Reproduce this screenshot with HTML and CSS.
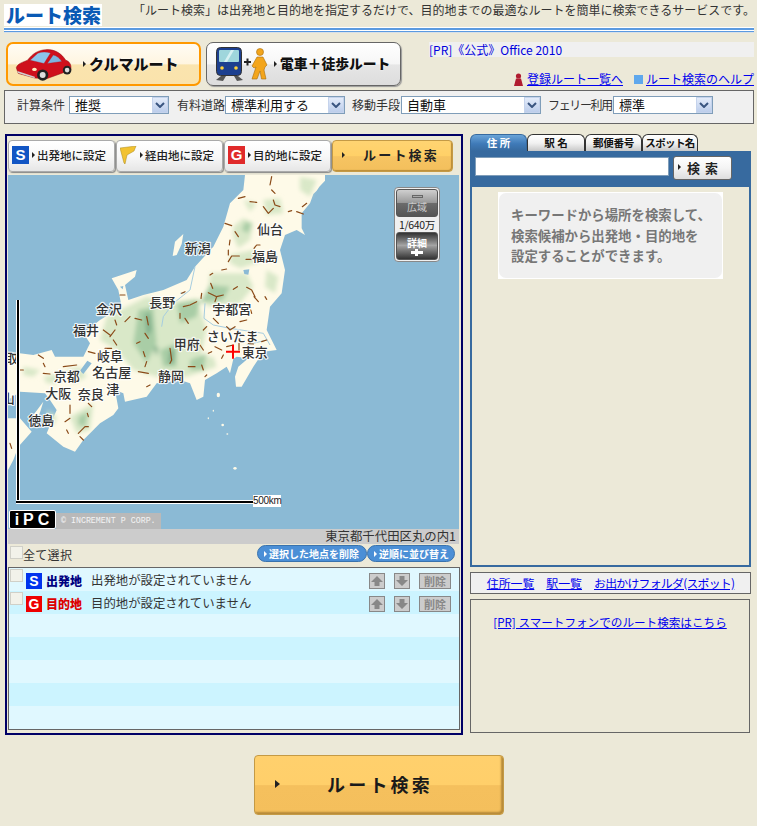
FILE: index.html
```html
<!DOCTYPE html>
<html lang="ja">
<head>
<meta charset="utf-8">
<title>ルート検索</title>
<link rel="stylesheet" href="styles.css">
</head>
<body>
<header class="top">
  <h1 class="logo">ルート検索</h1>
  <p class="lead">「ルート検索」は出発地と目的地を指定するだけで、目的地までの最適なルートを簡単に検索できるサービスです。</p>
</header>
<div class="rule"></div>

<div class="modes">
  <button class="mode mode-on">
    <svg class="car" width="60" height="33" viewBox="22 25 180 100">
      <path d="M28 85 C32 72 48 68 62 62 C78 42 92 32 118 30 C145 28 165 42 178 62 C190 66 196 76 193 92 L120 118 L84 116 L34 102 Z" fill="#cf101c" stroke="#8a0a10" stroke-width="1.500"/>
      <path d="M70 62 L93 41 C105 36 118 36 132 40 L112 72 Z" fill="#8cc4ea" stroke="#a5101a" stroke-width="1"/>
      <path d="M122 72 L140 46 C150 48 160 56 166 66 Z" fill="#7db4de" stroke="#a5101a" stroke-width="1"/>
      <path d="M31 95 L84 112 L84 117 L33 101 Z" fill="#cfcfcf"/>
      <ellipse cx="83" cy="90" rx="7" ry="5" fill="#ffeec0"/>
      <circle cx="108" cy="107" r="17" fill="#222"/><circle cx="108" cy="107" r="9" fill="#ddd"/>
      <circle cx="182" cy="92" r="13" fill="#222"/><circle cx="182" cy="92" r="7" fill="#ddd"/>
    </svg>
    <i class="tri tri-car"></i><span class="mode-text">クルマルート</span>
  </button>
  <button class="mode">
    <svg width="54" height="34" viewBox="0 0 54 34" class="rail">
      <path d="M5 29 L0 33 L7 34 L10 29 Z M18 29 L21 34 L27 33 L22 29 Z" fill="#555"/>
      <rect x="0.500" y="0.500" width="25" height="28" rx="4" fill="#1c3f8f" stroke="#333"/>
      <rect x="3" y="3" width="20" height="12" rx="1" fill="#9fd6dc"/>
      <path d="M8 15 L15 3 L18 3 L11 15 Z" fill="#d6f1f3"/>
      <circle cx="6" cy="21" r="1.800" fill="#ffd23a"/><circle cx="20" cy="21" r="1.800" fill="#ffd23a"/>
      <path d="M28 15 H35 M31.500 11.500 V18.500" stroke="#222" stroke-width="2"/>
      <circle cx="44" cy="5" r="3.500" fill="#f3a51c" stroke="#a86d0c" stroke-width=".6"/>
      <path d="M41 10 L47 10 L51 18 L49 20 L48 23 L50 32 L45.500 32 L44 24 L41 32 L36 32 L40 20 L38 21 L36 19 Z" fill="#f3a51c" stroke="#a86d0c" stroke-width=".6"/>
    </svg>
    <i class="tri tri-rail"></i><span class="mode-text mode-text-s">電車＋徒歩ルート</span>
  </button>
  <div class="mode-side">
    <div class="pr"><a href="#">[PR]《公式》Office 2010</a></div>
    <div class="helps">
      <svg width="9" height="13" viewBox="0 0 9 13"><circle cx="4.500" cy="3" r="2.600" fill="#b01c30"/><path d="M2 5.500 H7 L9 13 H0 Z" fill="#b01c30"/></svg>
      <a href="#">登録ルート一覧へ</a>
      <i class="sq"></i>
      <a href="#">ルート検索のヘルプ</a>
    </div>
  </div>
</div>

<form class="conds">
  <label class="cond c1">計算条件<span class="sel s1"><select><option>推奨</option></select><i class="arr"><svg width="10" height="6" viewBox="0 0 10 6"><path d="M1 1 L5 5 L9 1" fill="none" stroke="#3a5580" stroke-width="2"/></svg></i></span></label>
  <label class="cond c2">有料道路<span class="sel s2"><select><option>標準利用する</option></select><i class="arr"><svg width="10" height="6" viewBox="0 0 10 6"><path d="M1 1 L5 5 L9 1" fill="none" stroke="#3a5580" stroke-width="2"/></svg></i></span></label>
  <label class="cond c3">移動手段<span class="sel s3"><select><option>自動車</option></select><i class="arr"><svg width="10" height="6" viewBox="0 0 10 6"><path d="M1 1 L5 5 L9 1" fill="none" stroke="#3a5580" stroke-width="2"/></svg></i></span></label>
  <label class="cond c4">フェリー利用<span class="sel s1"><select><option>標準</option></select><i class="arr"><svg width="10" height="6" viewBox="0 0 10 6"><path d="M1 1 L5 5 L9 1" fill="none" stroke="#3a5580" stroke-width="2"/></svg></i></span></label>
</form>

<main class="main">
  <section class="left">
    <div class="acts">
      <button class="act"><b class="mark mark-s">S</b><i class="tri"></i>出発地に設定</button>
      <button class="act"><svg class="flag" width="17" height="18" viewBox="0 0 17 18"><path d="M0 2 L16 0 L14 5 L7 9 L5 18 L4 17 Z" fill="#f2c230" stroke="#a8881c" stroke-width=".5"/></svg><i class="tri"></i>経由地に設定</button>
      <button class="act"><b class="mark mark-g">G</b><i class="tri"></i>目的地に設定</button>
      <button class="act-go"><i class="tri tri-go"></i><span>ルート検索</span></button>
    </div>

    <div class="map">
      <svg class="mapsvg" width="451" height="354" viewBox="24 15 1353 1062">
        <defs><filter id="soft"><feGaussianBlur stdDeviation="7"/></filter><clipPath id="frame"><rect x="24" y="15" width="1353" height="1062"/></clipPath></defs>
        <rect class="sea" x="24" y="15" width="1353" height="1062"/>
        <g clip-path="url(#frame)">
        <path class="land" d="M735 15 L975 15 L975 32 L958 50 L950 62 L940 72 L930 100 L905 130 L905 175 L915 195 L890 180 L855 195 L840 240 L855 300 L845 370 L810 410 L800 480 L830 540 L790 545 L760 590 L725 650 L708 650 L705 620 L715 590 L745 565 L710 560 L700 567 L690 610 L680 590 L650 610 L615 630 L610 680 L590 690 L570 640 L540 630 L470 640 L440 680 L375 695 L370 670 L345 660 L355 715 L340 735 L300 760 L250 810 L225 845 L190 830 L140 790 L170 720 L150 690 L135 670 L60 665 L24 690 L24 545 L100 555 L155 540 L165 560 L250 560 L270 520 L250 490 L300 450 L365 410 L355 360 L335 325 L410 300 L405 320 L375 345 L385 390 L430 375 L490 360 L560 330 L585 290 L640 230 L670 170 L690 100 L730 60 Z"/>
        <path class="land" d="M24 745 L60 745 L95 785 L55 830 L40 870 L24 900 Z"/>
        <path class="land" d="M100 735 L130 695 L112 752 Z"/>
        <path class="land" d="M518 258 L525 215 L550 192 L545 222 L530 255 Z"/>
        <ellipse class="land" cx="655" cy="675" rx="5" ry="7"/><ellipse class="land" cx="640" cy="722" rx="2" ry="3"/><ellipse class="land" cx="625" cy="745" rx="2" ry="3"/><ellipse class="land" cx="668" cy="765" rx="4" ry="4"/><ellipse class="land" cx="682" cy="792" rx="3" ry="2"/><ellipse class="land" cx="705" cy="895" rx="5" ry="4"/>
        <g filter="url(#soft)">
          <path class="g1" d="M900 20 L950 30 L930 80 L900 60 Z M730 90 L770 100 L750 125 Z M790 90 L840 85 L850 130 L800 135 Z M730 145 L760 160 L750 210 L715 235 L700 200 L700 170 Z M690 255 L760 240 L780 275 L720 295 L690 280 Z M800 300 L835 320 L825 370 L795 350 Z M630 310 L740 310 L760 350 L720 400 L620 410 Z"/>
          <path class="g1" d="M320 440 L440 380 L510 400 L590 385 L620 480 L600 560 L640 560 L650 590 L560 620 L470 620 L400 600 L350 540 L300 510 Z"/>
          <path class="g1" d="M70 590 L120 600 L100 620 L70 615 Z M130 620 L180 610 L170 640 L140 640 Z M200 600 L240 590 L260 620 L220 640 Z M210 740 L280 700 L270 780 L230 790 Z M140 720 L170 740 L160 770 Z"/>
          <path class="g2" d="M630 345 L690 350 L670 390 L600 400 Z M415 420 L460 410 L470 520 L440 580 L400 520 Z M530 400 L600 390 L590 440 L540 460 Z M480 540 L530 520 L530 590 L490 590 Z M570 570 L620 550 L610 600 L570 600 Z M735 155 L755 160 L745 190 L725 180 Z M235 740 L265 725 L255 770 L235 765 Z"/>
          <path class="g3" d="M435 430 L450 430 L455 480 L440 500 Z M460 530 L475 530 L470 560 Z M510 540 L525 540 L520 580 L505 580 Z"/>
        </g>
        <path class="water" d="M585 290 L570 360 L520 400 L490 440 L485 470 M540 370 L555 368 M615 400 L612 445 L640 465 L690 475 L790 490 L810 525 M800 510 L740 525"/>
        <path class="lake" d="M262 572 L275 580 L250 612 L240 602 Z M730 300 L748 298 L745 314 L733 312 Z M360 350 L370 348 L368 358 Z"/>
        <path class="road" d="M815 20 L810 45 M815 60 L825 70 M715 85 L735 80 M750 95 L770 97 M820 90 L825 105 L840 110 M790 110 L805 130 L820 115 M865 125 L875 122 M890 125 L910 132 M907 110 L920 100 M675 160 L695 167 M705 185 L715 200 M690 210 L688 225 M685 240 L685 255 M685 275 L695 258 L718 258 M738 268 L755 268 M762 235 L770 225 L780 225 M665 300 L680 297 M630 315 L638 310 M632 340 L638 355 M700 358 L712 350 M740 352 L755 360 L765 380 M762 380 L775 395 M795 380 L800 388 M625 368 L650 380 L670 375 M650 380 L645 395 M605 370 L603 385 M550 410 L570 405 L590 395 M555 365 L545 370 M540 430 L540 445 M555 445 L565 460 M640 445 L655 460 M680 470 L690 480 L705 470 M720 455 L740 450 M755 430 L752 420 M610 480 L620 470 M645 530 L665 540 M680 530 L700 525 M717 520 L717 540 M745 520 L760 522 M785 515 L800 510 M665 565 L670 555 M625 550 L635 545 M600 525 L610 540 M510 535 L515 570 L510 580 M565 590 L585 590 M605 585 L610 600 M415 605 L445 610 M440 575 L435 590 M430 545 L435 560 M410 520 L420 515 M435 490 L445 505 M440 440 L445 465 M405 445 L425 450 M375 455 L390 440 M345 450 L350 465 M330 500 L345 480 M310 480 L330 495 M340 510 L350 525 M265 545 L285 550 M315 535 L335 535 M115 555 L130 565 M130 580 L135 590 M190 590 L230 585 M60 600 L70 600 M210 705 L210 730 M195 755 L210 745 M265 700 L275 710 M262 730 L265 740 M235 790 L255 770 L265 770 M240 800 L250 810 M200 780 L205 790 M30 820 L35 835 M440 650 L450 645 M615 620 L620 615 M360 375 L375 375 M130 610 L150 612"/>
        <text class="lb" x="810" y="192">仙台</text>
        <text class="lb" x="593" y="250">新潟</text>
        <text class="lb" x="795" y="272">福島</text>
        <text class="lb" x="487" y="411">長野</text>
        <text class="lb" x="327" y="432">金沢</text>
        <text class="lb" x="695" y="432">宇都宮</text>
        <text class="lb" x="258" y="495">福井</text>
        <text class="lb" x="698" y="512">さいたま</text>
        <text class="lb" x="560" y="536">甲府</text>
        <text class="lb" x="764" y="561">東京</text>
        <text class="lb" x="330" y="573">岐阜</text>
        <text class="lb" x="335" y="621">名古屋</text>
        <text class="lb" x="200" y="633">京都</text>
        <text class="lb" x="513" y="633">静岡</text>
        <text class="lb" x="338" y="672">津</text>
        <text class="lb" x="175" y="685">大阪</text>
        <text class="lb" x="272" y="688">奈良</text>
        <text class="lb" x="124" y="765">徳島</text>
        <text class="lb" x="15" y="578">鳥取</text>
        <text class="lb" x="5" y="698">岡山</text>
        <path class="cross" d="M678 545 H720 M699 524 V566"/>
        </g>
      </svg>

      <div class="scale-v"></div>
      <div class="scale-h"></div>
      <span class="scale-t">500km</span>

      <div class="credit"><b class="ipc">iPC</b><span class="copy">© INCREMENT P CORP.</span></div>

      <div class="zoomer">
        <div class="z-btn z-out"><i class="z-minus"></i><span>広域</span></div>
        <div class="z-val">1/640万</div>
        <div class="z-btn z-in"><span>詳細</span><i class="z-plus"></i></div>
      </div>
    </div>

    <div class="addr">東京都千代田区丸の内1</div>
    <div class="listbar">
      <label class="all"><i class="check"></i>全て選択</label>
      <div class="pills">
        <button class="pill"><i class="tri tri-w"></i>選択した地点を削除</button>
        <button class="pill pill-2"><i class="tri tri-w"></i>逆順に並び替え</button>
      </div>
    </div>
    <div class="list">
      <div class="row">
        <i class="check"></i><b class="dot dot-s">S</b><b class="kind kind-s">出発地</b>
        <span class="row-t">出発地が設定されていません</span>
        <button class="sb sb-up"><svg width="12" height="10" viewBox="0 0 12 10"><path d="M6 0 L12 6 H8.500 V10 H3.500 V6 H0 Z" fill="#888"/></svg></button>
        <button class="sb sb-dn"><svg width="12" height="10" viewBox="0 0 12 10"><path d="M6 10 L12 4 H8.500 V0 H3.500 V4 H0 Z" fill="#888"/></svg></button>
        <button class="sb sb-del">削除</button>
      </div>
      <div class="row">
        <i class="check"></i><b class="dot dot-g">G</b><b class="kind kind-g">目的地</b>
        <span class="row-t">目的地が設定されていません</span>
        <button class="sb sb-up"><svg width="12" height="10" viewBox="0 0 12 10"><path d="M6 0 L12 6 H8.500 V10 H3.500 V6 H0 Z" fill="#888"/></svg></button>
        <button class="sb sb-dn"><svg width="12" height="10" viewBox="0 0 12 10"><path d="M6 10 L12 4 H8.500 V0 H3.500 V4 H0 Z" fill="#888"/></svg></button>
        <button class="sb sb-del">削除</button>
      </div>
      <div class="row"></div><div class="row"></div><div class="row"></div><div class="row"></div><div class="row"></div>
    </div>
  </section>

  <aside class="right">
    <nav class="tabs">
      <a class="tab tab-on t1">住 所</a>
      <a class="tab t2">駅 名</a>
      <a class="tab t3">郵便番号</a>
      <a class="tab t4">スポット名</a>
    </nav>
    <div class="panel">
      <div class="searchbar">
        <input class="kw" type="text">
        <button class="find"><i class="tri"></i><span>検 索</span></button>
      </div>
      <div class="note"><p class="note-in">キーワードから場所を検索して、<br>検索候補から出発地・目的地を<br>設定することができます。</p></div>
    </div>
    <div class="lists">
      <a href="#">住所一覧</a><a href="#">駅一覧</a><a class="spot" href="#">お出かけフォルダ(スポット)</a>
    </div>
    <div class="prbox"><a href="#">[PR] スマートフォンでのルート検索はこちら</a></div>
  </aside>
</main>

<div class="foot"><button class="bigbtn"><i class="tri tri-big"></i><span>ルート検索</span></button></div>
</body>
</html>
```

FILE: styles.css
```css
* { box-sizing: border-box; }
html, body { margin: 0; padding: 0; }
body {
  width: 757px;
  height: 826px;
  overflow: hidden;
  background: #ece9d8;
  color: #222;
  font-family: "Noto Sans CJK JP", "Liberation Sans", sans-serif;
  font-size: 12px;
  line-height: 1.2;
}
a { color: #0000ee; text-decoration: underline; }
i { display: block; font-style: normal; }
button { font-family: inherit; padding: 0; margin: 0; cursor: pointer; }

.tri { width: 0; height: 0; flex: none; border-left: 4px solid #222; border-top: 3.500px solid transparent; border-bottom: 3.500px solid transparent; }

/* header */
.top { height: 27px; display: flex; align-items: flex-start; justify-content: space-between; padding: 4px 0 0 4px; }
.logo { margin: 0; width: 98px; height: 22px; background: #fff; color: #0a5ab5; font-size: 19px; font-weight: 900; line-height: 22px; padding-left: 2px; white-space: nowrap; }
.lead { margin: -1px 0 0; font-size: 12px; line-height: 14px; white-space: nowrap; color: #333; width: 624px; }
.rule { margin: 0 3px 0 4px; height: 6px; background-image: linear-gradient(#fff 0 1px, #5b9ae0 1px 3px, #fff 3px 4px, #5b9ae0 4px 5px, #d8e0e8 5px); }

/* mode row */
.modes { display: flex; height: 50px; margin-top: 7px; padding: 2px 3px 0 6px; align-items: flex-start; }
.mode { display: flex; align-items: center; width: 195px; height: 44px; border: 1px solid #666; border-radius: 7px; background: linear-gradient(#fff, #f6f6f6 50%, #e6e6e6 52%, #ddd); box-shadow: 1px 1px 1px #999; margin-right: 5px; padding-left: 9px; }
.mode-on { border: 2px solid #ff9900; box-shadow: none; padding-left: 6px; background: linear-gradient(#fffcf4, #fff5e0 50%, #fae4ae 52%, #fae3ac); }
.tri-car { margin-left: 9px; border-left-width: 3px; border-top-width: 3px; border-bottom-width: 3px; }
.tri-rail { margin-left: 4px; border-left-width: 3px; border-top-width: 3px; border-bottom-width: 3px; }
.mode-text { font-size: 15px; font-weight: 900; margin: 0 0 2px 3px; color: #111; white-space: nowrap; text-shadow: 0 0 2px #fff; }
.mode-text-s { font-size: 13.800px; }
.mode-side { flex: 1; display: flex; flex-direction: column; margin-left: 23px; }
.pr { height: 15px; background: #f0f0f0; font-size: 12px; line-height: 15px; white-space: nowrap; }
.pr a { text-decoration: none; color: #0000dd; }
.helps { display: flex; justify-content: flex-end; align-items: center; height: 15px; margin-top: 15px; font-size: 12px; white-space: nowrap; }
.helps svg { margin-right: 4px; }
.sq { width: 9px; height: 9px; background: #5fa8ec; margin: 0 3px 0 11px; }

/* conditions */
.conds { display: flex; height: 34px; margin: 0 3px 0 4px; background: #f0f0f0; border: 1px solid #666; padding: 5px 0 0 12px; color: #333; }
.cond { display: flex; height: 18px; line-height: 18px; white-space: nowrap; }
.c1 { width: 160px; } .c2 { width: 175px; } .c3 { width: 196px; }
.c4 { letter-spacing: -1.350px; }
.sel { position: relative; display: block; height: 18px; border: 1px solid #7f9db9; background: #fff; letter-spacing: 0; }
.c1 .sel { margin-left: 4px; }
.c3 .sel { margin-left: 1px; }
.c2 .sel { margin-left: 0; }
.c4 .sel { margin-left: 1px; }
.s1 { width: 100px; } .s2 { width: 120px; } .s3 { width: 140px; }
.sel select { appearance: none; display: block; width: 100%; height: 16px; border: 0; outline: 0; background: transparent; font: 13px/16px "Noto Sans CJK JP", sans-serif; color: #111; padding: 0 0 0 5px; }
.arr { position: absolute; right: 0; top: 0; width: 16px; height: 16px; background: linear-gradient(#e4ecfa, #bccdeb); border: 1px solid #c5d3ec; display: flex; align-items: center; justify-content: center; }

/* main */
.main { display: flex; margin-top: 10px; padding-left: 5px; }
.left { width: 458px; height: 601px; border: 2px solid #000066; padding: 4px 2px 0 1px; flex: none; }
.acts { display: flex; height: 32px; margin-bottom: 3px; }
.act { display: flex; align-items: center; width: 107px; margin-right: 1px; height: 32px; border: 1px solid #aaa; border-radius: 4px; background: linear-gradient(#fff, #f8f8f8 50%, #e6e6e6); box-shadow: 1px 1px 1px #888; font-size: 11.500px; font-weight: 500; color: #222; padding: 0 0 2px 3px; white-space: nowrap; }
.act .tri { margin: 0 2px 0 3px; border-left-width: 3px; border-top-width: 3px; border-bottom-width: 3px; }
.mark { width: 17px; height: 18px; color: #fff; font: 900 15px/18px "Liberation Sans", sans-serif; text-align: center; }
.mark-s { background: #1155c4; } .mark-g { background: #e02a2a; }
.act-go { display: flex; align-items: center; width: 121px; height: 32px; border: 1px solid #c49a45; border-radius: 4px; background: linear-gradient(#ffd472, #ffd067 50%, #f6c462 52%, #f3bf5c); box-shadow: inset -1px -1px 1px #b88b38; font-size: 13px; font-weight: 700; color: #222; padding: 0 0 3px 9px; white-space: nowrap; }
.act-go span { margin-left: 18px; letter-spacing: 2.200px; }
.tri-go { border-left-width: 3px; border-top-width: 3px; border-bottom-width: 3px; }

.map { position: relative; width: 451px; height: 354px; overflow: hidden; }
.mapsvg { display: block; }
.sea { fill: #8bbad5; }
.land { fill: #fefae8; }
.g1 { fill: #d9e8c8; } .g2 { fill: #a9cda6; } .g3 { fill: #7fae8a; }
.water { fill: none; stroke: #a6cde0; stroke-width: 3; }
.lake { fill: #8bbad5; }
.road { fill: none; stroke: #8a4a18; stroke-width: 3.600; stroke-linecap: round; stroke-linejoin: round; }
.lb { font-size: 39px; font-weight: 500; text-anchor: middle; fill: #333; stroke: #fff; stroke-opacity: .85; stroke-width: 7px; paint-order: stroke; stroke-linejoin: round; }
.cross { fill: none; stroke: #ff0000; stroke-width: 6; }
.scale-v { position: absolute; left: 8px; top: 125px; width: 4px; height: 204px; background: #000; border-left: 1px solid #fff; border-right: 1px solid #fff; }
.scale-h { position: absolute; left: 8px; top: 325px; width: 237px; height: 4px; background: #000; border-top: 1px solid #fff; border-bottom: 1px solid #fff; }
.scale-t { position: absolute; left: 245px; top: 320px; width: 28px; height: 12px; background: #fff; color: #222; font: 10px/12px "Liberation Sans", sans-serif; letter-spacing: -.3px; }
.credit { position: absolute; left: 1px; bottom: 0; display: flex; align-items: flex-end; }
.ipc { display: block; width: 47px; height: 19px; background: #000; border: 1px solid #fff; border-radius: 2px; color: #fff; font: 900 16px/17px "Liberation Sans", sans-serif; letter-spacing: 4px; text-align: center; padding-left: 3px; }
.copy { display: block; width: 105px; height: 16px; background: #b9b9b9; color: #f4f4f4; font: 8.300px/16px "Liberation Mono", monospace; padding-left: 5px; white-space: nowrap; }
.zoomer { position: absolute; left: 386px; top: 12px; width: 46px; height: 75px; background: #f0f0f0; border: 1px solid #888; border-radius: 4px; padding: 1px; display: flex; flex-direction: column; }
.z-btn { height: 28px; flex: none; border-radius: 3px; border: 1px solid #555; display: flex; flex-direction: column; align-items: center; justify-content: center; font-size: 10px; line-height: 11px; }
.z-out { background: linear-gradient(#cfcfcf, #9a9a9a 48%, #6c6c6c 50%, #555); color: #ccc; }
.z-in { background: linear-gradient(#333, #aaa 50%, #999 52%, #333); color: #fff; font-weight: 700; }
.z-minus { width: 11px; height: 3px; background: #aaa; border: 1px solid #666; margin-bottom: 3px; }
.z-plus { width: 12px; height: 3px; background: #fff; margin: 3px 0 2px; position: relative; }
.z-plus::after { content: ""; position: absolute; left: 4px; top: -2px; width: 3px; height: 7px; background: #fff; }
.z-val { flex: 1; text-align: center; font-size: 10.500px; line-height: 15px; letter-spacing: -.3px; color: #222; white-space: nowrap; }

.addr { width: 451px; height: 15px; background: #cccccc; text-align: right; font-size: 12.400px; line-height: 15px; padding-right: 3px; color: #333; }
.listbar { display: flex; justify-content: space-between; height: 23px; width: 452px; }
.all { display: flex; align-items: flex-start; font-size: 12px; line-height: 14px; color: #333; padding: 4px 0 0 2px; letter-spacing: .3px; }
.check { width: 13px; height: 13px; background: #f2f2ea; border: 1px solid #d0d0c8; flex: none; }
.all .check { margin-top: -2px; }
.pills { display: flex; padding-top: 1px; padding-right: 5px; }
.pill { display: flex; align-items: center; width: 110px; height: 17px; background: #4b8fd6; border: 1px solid #3a73ad; border-radius: 9px; color: #fff; font-size: 10px; font-weight: 700; padding-left: 6px; white-space: nowrap; }
.pill-2 { width: 88px; }
.tri-w { border-left: 3px solid #fff; border-top: 3px solid transparent; border-bottom: 3px solid transparent; margin-right: 2px; }
.list { width: 452px; height: 163px; border: 1px solid #666; background: #e0f8ff; }
.row { display: flex; align-items: flex-start; height: 23px; }
.row:nth-child(even) { background: #ccf4ff; }
.row > .check { margin: 1px 0 0 1px; }
.dot { width: 16px; height: 16px; margin: 5px 0 0 3px; color: #fff; font: 900 14px/16px "Liberation Sans", sans-serif; text-align: center; flex: none; }
.dot-s { background: #0033ee; } .dot-g { background: #ee0000; }
.kind { width: 36px; margin: 5px 0 0 4px; font-size: 12px; font-weight: 900; line-height: 16px; white-space: nowrap; }
.kind-s { color: #000080; } .kind-g { color: #dd0000; }
.row-t { width: 278px; margin: 4px 0 0 9px; font-size: 12.400px; line-height: 17px; color: #333; white-space: nowrap; }
.sb { height: 16px; margin-top: 5px; background: #cccccc; border: 1px solid #888; display: flex; align-items: center; justify-content: center; font-size: 11px; line-height: 14px; color: #888; font-weight: 700; flex: none; }
.sb-up, .sb-dn { width: 16px; }
.sb-dn { margin-left: 9px; }
.sb-del { width: 32px; margin-left: 9px; }

/* right */
.right { width: 281px; margin-left: 7px; flex: none; }
.tabs { display: flex; height: 17px; }
.tab { display: block; height: 17px; border: 1px solid #333; border-bottom: 0; border-radius: 6px 6px 0 0; background: linear-gradient(#fff, #f2f2f2 50%, #c8c8c8); color: #111; font-size: 10.500px; font-weight: 700; line-height: 16px; text-align: center; white-space: nowrap; text-decoration: none; }
.t1 { width: 57px; } .t2 { width: 58px; } .t3 { width: 57px; } .t4 { width: 56px; }
.tab-on { border-color: #376a9f; background: linear-gradient(#6aa4d8, #3f7ab8 55%, #376a9f); color: #fff; }
.t3 { letter-spacing: -.3px; }
.t4 { letter-spacing: -.6px; }
.panel { height: 416px; border: 2px solid #376a9f; border-top: 0; }
.searchbar { display: flex; align-items: flex-start; height: 36px; background: #376a9f; padding: 5px 0 0 3px; }
.kw { width: 194px; height: 19px; margin-top: 1px; border: 1px solid #7f9db9; background: #fff; padding: 0; outline: 0; }
.find { display: flex; align-items: center; width: 59px; height: 24px; margin-left: 4px; border: 1px solid #666; border-radius: 3px; background: linear-gradient(#fff, #f4f4f4 50%, #dedede); padding: 0 0 2px 4px; font-size: 13px; font-weight: 700; color: #222; }
.find .tri { border-left-width: 3px; border-top-width: 3px; border-bottom-width: 3px; }
.find span { margin-left: 6px; letter-spacing: 1px; white-space: nowrap; }
.note { width: 225px; height: 87px; margin: 5px 0 0 26px; background: #fff; padding: 1px; }
.note-in { margin: 0; height: 85px; background: #f0f0f0; border-radius: 7px; color: #777; font-size: 13.400px; font-weight: 700; line-height: 20.500px; padding: 11px 0 0 12px; white-space: nowrap; }
.lists { display: flex; justify-content: center; gap: 12px; height: 22px; margin-top: 5px; background: #f0f0f0; border: 1px solid #666; font-size: 11.900px; line-height: 19px; white-space: nowrap; }
.spot { letter-spacing: -.75px; }
.prbox { width: 280px; height: 134px; margin-top: 5px; border: 1px solid #666; text-align: center; font-size: 11.600px; line-height: 16px; padding-top: 14px; }

.foot { display: flex; justify-content: center; padding: 20px 0 0 1px; }
.bigbtn { display: flex; align-items: center; width: 250px; height: 60px; border: 1px solid #c49a45; border-radius: 4px; background: linear-gradient(#ffd06d, #ffcf6a 50%, #f5c05d 51%, #f4bf5c); box-shadow: inset -2px -2px 2px #b68a38; font-size: 18px; font-weight: 700; color: #1a1a1a; padding: 0 0 3px 20px; white-space: nowrap; }
.tri-big { border-left-width: 5px; border-top-width: 4px; border-bottom-width: 4px; }
.bigbtn span { margin-left: 47px; letter-spacing: 3.200px; }
```
